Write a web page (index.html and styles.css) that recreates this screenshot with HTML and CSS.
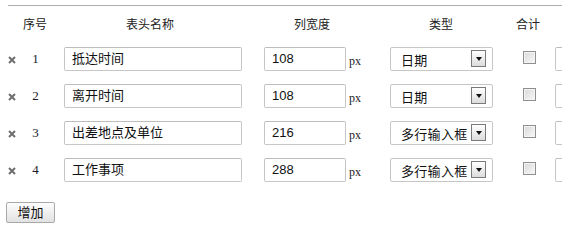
FILE: index.html
```html
<!DOCTYPE html>
<html lang="zh">
<head>
<meta charset="utf-8">
<link rel="stylesheet" href="styles.css">
</head>
<body>
<div class="page">
  <div class="rule"></div>
  <div class="row head">
    <div class="h"></div>
    <div class="h">序号</div>
    <div class="h">表头名称</div>
    <div class="h">列宽度</div>
    <div class="h">类型</div>
    <div class="h">合计</div>
    <div class="h"></div>
  </div>
  <div class="rows">
    <div class="row">
      <div class="c-del"><svg class="x" viewBox="0 0 8 8"><path d="M1 1L7 7M7 1L1 7"/></svg></div>
      <div class="c-num num">1</div>
      <div class="c-name"><div class="inp name">抵达时间</div></div>
      <div class="c-width"><div class="inp w">108</div><span class="px">px</span></div>
      <div class="c-type"><div class="sel"><span class="sel-t">日期</span><span class="arrow"><i></i></span></div></div>
      <div class="c-sum"><span class="chk"></span></div>
      <div class="c-extra"><div class="inp ex"></div></div>
    </div>
    <div class="row">
      <div class="c-del"><svg class="x" viewBox="0 0 8 8"><path d="M1 1L7 7M7 1L1 7"/></svg></div>
      <div class="c-num num">2</div>
      <div class="c-name"><div class="inp name">离开时间</div></div>
      <div class="c-width"><div class="inp w">108</div><span class="px">px</span></div>
      <div class="c-type"><div class="sel"><span class="sel-t">日期</span><span class="arrow"><i></i></span></div></div>
      <div class="c-sum"><span class="chk"></span></div>
      <div class="c-extra"><div class="inp ex"></div></div>
    </div>
    <div class="row">
      <div class="c-del"><svg class="x" viewBox="0 0 8 8"><path d="M1 1L7 7M7 1L1 7"/></svg></div>
      <div class="c-num num">3</div>
      <div class="c-name"><div class="inp name">出差地点及单位</div></div>
      <div class="c-width"><div class="inp w">216</div><span class="px">px</span></div>
      <div class="c-type"><div class="sel"><span class="sel-t">多行输入框</span><span class="arrow"><i></i></span></div></div>
      <div class="c-sum"><span class="chk"></span></div>
      <div class="c-extra"><div class="inp ex"></div></div>
    </div>
    <div class="row">
      <div class="c-del"><svg class="x" viewBox="0 0 8 8"><path d="M1 1L7 7M7 1L1 7"/></svg></div>
      <div class="c-num num">4</div>
      <div class="c-name"><div class="inp name">工作事项</div></div>
      <div class="c-width"><div class="inp w">288</div><span class="px">px</span></div>
      <div class="c-type"><div class="sel"><span class="sel-t">多行输入框</span><span class="arrow"><i></i></span></div></div>
      <div class="c-sum"><span class="chk"></span></div>
      <div class="c-extra"><div class="inp ex"></div></div>
    </div>
  </div>
  <div class="actions"><button class="btn">增加</button></div>
</div>
</body>
</html>
```

FILE: styles.css
```css
html, body {
  margin: 0;
  padding: 0;
  background: #fff;
  overflow: hidden;
}
body {
  font-family: "Liberation Sans", "Noto Sans CJK SC", sans-serif;
  color: #222;
  font-size: 13px;
}
.page {
  width: 562px;
  height: 230px;
  overflow: hidden;
}
.rule {
  margin: 5px 0 0 8px;
  border-top: 1px solid #acacac;
}
.row {
  display: grid;
  grid-template-columns: 22px 26px 204px 120px 138px 36px 60px;
  width: 606px;
  align-items: center;
}
.head {
  margin-top: 11px;
  height: 16px;
  font-size: 12px;
  line-height: 16px;
  color: #222;
}
.h {
  text-align: center;
  white-space: nowrap;
}
.rows {
  margin-top: 14px;
  display: flex;
  flex-direction: column;
  gap: 13px;
}
.rows .row {
  height: 24px;
}
.c-del {
  padding-left: 8px;
  display: flex;
  align-items: center;
}
.x {
  width: 8px;
  height: 8px;
  stroke: #6e6e6e;
  stroke-width: 2;
  margin-top: 1px;
}
.num {
  font-family: "Liberation Serif", serif;
  font-size: 13px;
  text-align: center;
  color: #1a1a2a;
  padding-left: 1px;
}
.inp {
  box-sizing: border-box;
  height: 24px;
  border: 1px solid #c6c6c6;
  border-top-color: #bdbdbd;
  border-radius: 2px;
  background: #fff;
  color: #111;
  font-size: 13px;
  line-height: 22px;
  padding-left: 7px;
  white-space: nowrap;
  overflow: hidden;
}
.name {
  margin-left: 16px;
  width: 178px;
}
.c-width {
  display: flex;
  align-items: center;
}
.w {
  margin-left: 12px;
  width: 82px;
}
.px {
  font-family: "Liberation Serif", serif;
  font-size: 12px;
  color: #222;
  margin-left: 3px;
  margin-top: 4px;
}
.sel {
  box-sizing: border-box;
  margin-left: 18px;
  width: 103px;
  height: 24px;
  border: 1px solid #c6c6c6;
  border-radius: 2px;
  display: flex;
  align-items: center;
  padding-left: 10px;
  padding-right: 6px;
  background: #fff;
}
.sel-t {
  flex: 1;
  font-size: 13px;
  letter-spacing: 0.3px;
  color: #111;
  white-space: nowrap;
  overflow: hidden;
}
.arrow {
  box-sizing: border-box;
  width: 15px;
  height: 17px;
  border: 1px solid #7a7a7a;
  background: linear-gradient(#ffffff, #dcdcdc);
  display: flex;
  align-items: center;
  justify-content: center;
  margin-top: -1px;
  flex: none;
}
.arrow i {
  width: 0;
  height: 0;
  border-left: 3.5px solid transparent;
  border-right: 3.5px solid transparent;
  border-top: 4px solid #111;
  margin-top: 1px;
}
.c-sum {
  display: flex;
  align-items: flex-start;
  height: 24px;
}
.chk {
  box-sizing: border-box;
  margin-left: 13px;
  margin-top: 4px;
  width: 13px;
  height: 13px;
  border: 1px solid #8f8f8f;
  background: linear-gradient(135deg, #d8d8d8, #f8f8f8);
  box-shadow: inset 0 0 0 1px #f4f4f4;
}
.ex {
  margin-left: 9px;
  width: 60px;
}
.actions {
  margin-top: 20px;
  padding-left: 6px;
}
.btn {
  box-sizing: border-box;
  width: 49px;
  height: 21px;
  border: 1px solid #a9a9a9;
  border-radius: 2px;
  background: linear-gradient(#fdfdfd, #e2e2e2);
  font-family: "Liberation Sans", "Noto Sans CJK SC", sans-serif;
  font-size: 13px;
  color: #111;
  padding: 0;
  line-height: 19px;
}
```
